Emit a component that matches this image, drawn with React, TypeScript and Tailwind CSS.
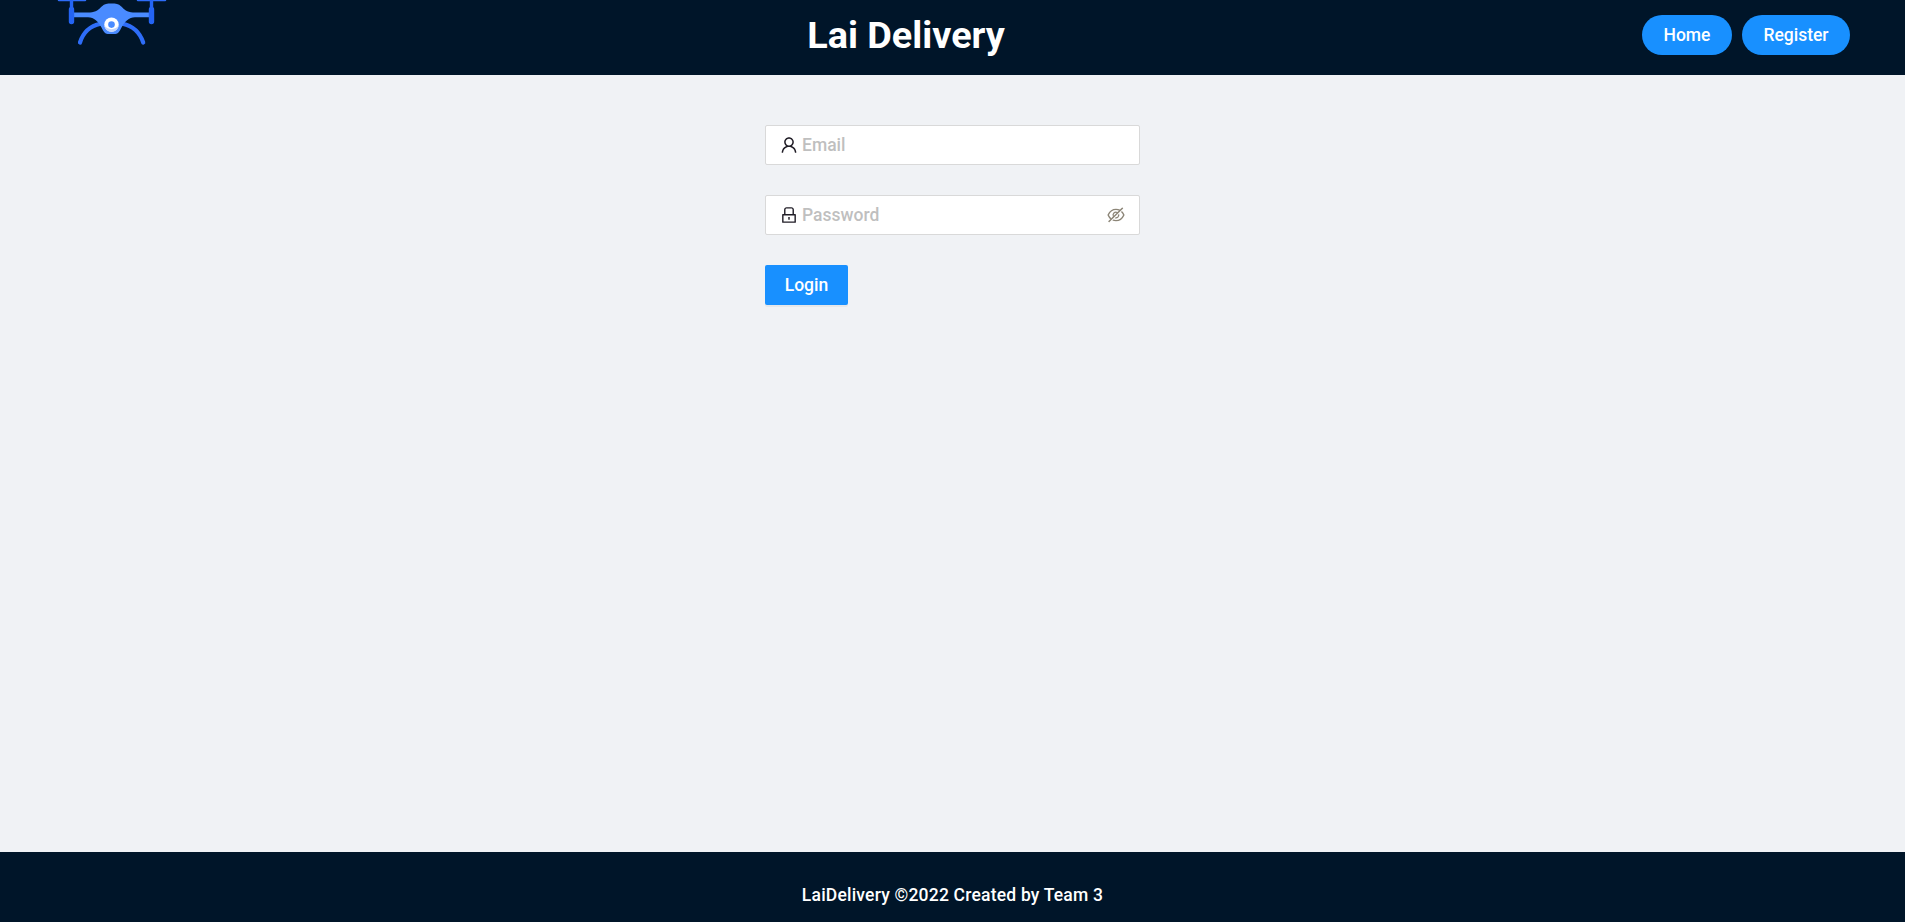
import { useState } from "react";
import {
  AiOutlineEye,
  AiOutlineEyeInvisible,
  AiOutlineLock,
  AiOutlineUser,
} from "react-icons/ai";

function DroneLogo() {
  return (
    <svg className="block h-[50px] w-[140px]" viewBox="0 0 140 50" fill="none" aria-hidden="true">
      <path d="M19 0H45M98 0H125" stroke="#2e6df8" strokeWidth="2.6" strokeLinecap="round" />
      <path d="M31.5 0V9M111.5 0V9" stroke="#2464f4" strokeWidth="3.4" />
      <path
        d="M60.5 23.8C50 26 43 33 40 42.5M82.5 23.8C93 26 100 33 103.2 42.5"
        stroke="#2e6df8"
        strokeWidth="4.2"
        strokeLinecap="round"
      />
      <path
        d="M34 12.4H50C56 12.4 59 9 62 6.2C64.5 3.9 67 3.5 71.5 3.5C76 3.5 78.5 3.9 81 6.2C84 9 87 12.4 93 12.4H109V17.2H95C89 17.2 84.5 21.5 81.5 27.5C79.5 31.6 78 34 75.5 34H67.5C65 34 63.5 31.6 61.5 27.5C58.5 21.5 54 17.2 48 17.2H34Z"
        fill="#4a8bff"
      />
      <path d="M31.5 9.5V21.5M111.5 9.5V21.5" stroke="#2464f4" strokeWidth="5.4" strokeLinecap="round" />
      <circle cx="71.5" cy="24.6" r="7.2" fill="#fff" />
      <path d="M64.3 25C64.7 34 78.3 34 78.7 25C76.5 30.5 66.5 30.5 64.3 25Z" fill="#c5d6fb" />
      <circle cx="71.5" cy="24.6" r="3.3" fill="#4a8bff" />
    </svg>
  );
}

export default function App() {
  const [visible, setVisible] = useState(false);
  return (
    <div className="flex h-screen flex-col bg-[#f0f2f5] font-['Roboto',sans-serif] text-[17.5px] font-medium">
      <header className="flex h-[75px] shrink-0 items-start justify-between bg-[#001529] pr-[55px] pl-10">
        <DroneLogo />
        <h1 className="pt-3 pr-2.5 text-[37.8px] leading-[47px] font-bold text-white">Lai Delivery</h1>
        <nav className="flex justify-end gap-2.5 pt-[15px] text-white">
          <button className="h-10 w-[90px] rounded-full bg-[#1890ff]">Home</button>
          <button className="h-10 w-[108px] rounded-full bg-[#1890ff]">Register</button>
        </nav>
      </header>
      <main className="flex grow justify-center pt-[50px]">
        <form className="flex w-[375px] flex-col gap-[30px]" onSubmit={(e) => e.preventDefault()}>
          <label className="flex h-10 items-center gap-[3.5px] rounded-[2px] border border-[#d9d9d9] bg-white pr-[13px] pl-[12.5px]">
            <AiOutlineUser className="size-5 shrink-0 text-[#201d26]" />
            <input type="email" placeholder="Email" className="min-w-0 grow outline-none placeholder:text-[#bfbfbf]" />
          </label>
          <label className="flex h-10 items-center gap-[3.5px] rounded-[2px] border border-[#d9d9d9] bg-white pr-[13px] pl-[12.5px]">
            <AiOutlineLock className="size-5 shrink-0 text-[#201d26]" />
            <input
              type={visible ? "text" : "password"}
              placeholder="Password"
              className="min-w-0 grow outline-none placeholder:text-[#bfbfbf]"
            />
            <button type="button" className="text-[#8c8577]" onClick={() => setVisible(!visible)}>
              {visible ? <AiOutlineEye className="size-5" /> : <AiOutlineEyeInvisible className="size-5" />}
            </button>
          </label>
          <button className="h-10 w-[83px] rounded-[2px] bg-[#1890ff] text-white shadow-[0_2px_0_rgba(0,0,0,0.045)]">
            Login
          </button>
        </form>
      </main>
      <footer className="flex h-[70px] shrink-0 justify-center bg-[#001529] pt-[30px] leading-[27px] tracking-[0.2px] text-white">
        LaiDelivery ©2022 Created by Team 3
      </footer>
    </div>
  );
}
